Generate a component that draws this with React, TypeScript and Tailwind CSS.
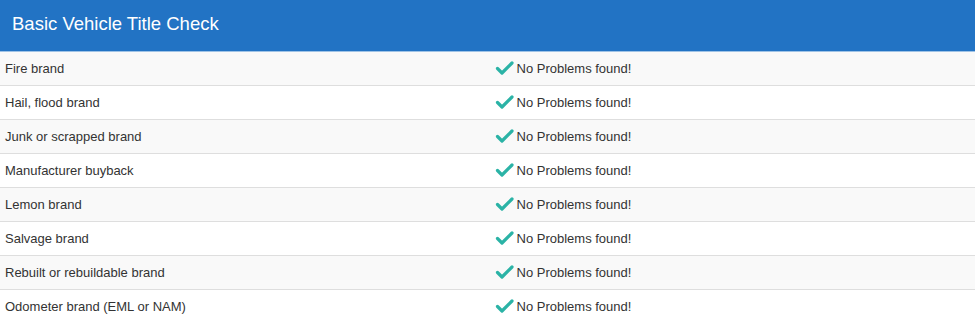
const ITEMS = [
  'Fire brand',
  'Hail, flood brand',
  'Junk or scrapped brand',
  'Manufacturer buyback',
  'Lemon brand',
  'Salvage brand',
  'Rebuilt or rebuildable brand',
  'Odometer brand (EML or NAM)',
]

function Check() {
  return (
    <svg width="19" height="15" viewBox="0 0 19 15" className="shrink-0">
      <polyline
        points="2.5,7.5 7,12 17,2"
        fill="none"
        stroke="#2bb3a6"
        strokeWidth="3.2"
        strokeLinecap="round"
        strokeLinejoin="round"
      />
    </svg>
  )
}

export default function App() {
  return (
    <div className="w-[975px] bg-white font-['Liberation_Sans',Arial,sans-serif] text-[#333]">
      <div className="h-[52px] bg-[#2273c4] border-b border-[#9fc3e6] flex items-center px-3 pb-[4px]">
        <h1 className="text-[18.5px] text-white font-normal">Basic Vehicle Title Check</h1>
      </div>
      <div>
        {ITEMS.map((item, i) => (
          <div
            key={item}
            className={`grid grid-cols-2 h-[34px] border-b border-[#dedede] text-[13px] ${i % 2 === 0 ? 'bg-[#f9f9f9]' : 'bg-white'}`}
          >
            <div className="flex items-center px-[5px]">{item}</div>
            <div className="flex items-center pl-[7px] gap-[3px]">
              <Check />
              <span>No Problems found!</span>
            </div>
          </div>
        ))}
      </div>
    </div>
  )
}
